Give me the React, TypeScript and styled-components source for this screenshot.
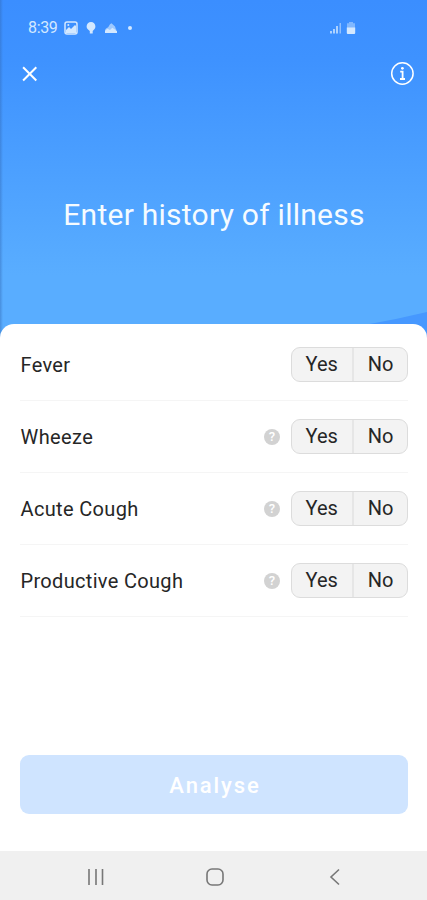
import React from "react";
import styled, { createGlobalStyle } from "styled-components";

const GlobalStyle = createGlobalStyle`
  * { box-sizing: border-box; }
  html, body { margin: 0; padding: 0; background: #fff; }
  body { font-family: Roboto, "Liberation Sans", sans-serif; }
  button { font-family: inherit; }
`;

const Screen = styled.main`
  width: 427px;
  height: 900px;
  display: flex;
  flex-direction: column;
  overflow: hidden;
  background: #fff;
`;

const Header = styled.header`
  position: relative;
  height: 338px;
  flex: none;
  display: flex;
  flex-direction: column;
  background:
    linear-gradient(to right, rgba(50, 105, 180, 0.45) 0, rgba(50, 105, 180, 0) 3px),
    linear-gradient(#3b8eff 0, #3e92ff 60px, #59adff 275px, #59adff 100%);
`;

const Wedge = styled.svg`
  position: absolute;
  right: 0;
  bottom: 0;
`;

const StatusBar = styled.div`
  height: 55px;
  padding: 0 71px 0 28px;
  display: flex;
  align-items: center;
  justify-content: space-between;
`;

const StatusGroup = styled.div<{ $gap: number }>`
  display: flex;
  align-items: center;
  gap: ${(p) => p.$gap}px;
  color: #d3e8ff;
`;

const Clock = styled.span`
  width: 28px;
  font-size: 16px;
  line-height: 20px;
  letter-spacing: -0.35px;
`;

const Toolbar = styled.div`
  height: 37px;
  padding: 0 13px 0 22px;
  display: flex;
  align-items: center;
  justify-content: space-between;
`;

const IconButton = styled.button`
  padding: 0;
  border: 0;
  background: none;
  color: #fff;
  display: flex;
`;

const Title = styled.h1`
  margin: 102px 0 0;
  padding-left: 1px;
  font-size: 30px;
  line-height: 41px;
  font-weight: 400;
  letter-spacing: 0.26px;
  text-align: center;
  color: #f5fbff;
`;

const Sheet = styled.section`
  position: relative;
  flex: 1;
  margin-top: -14.5px;
  padding: 5.5px 19px 37px 20px;
  display: flex;
  flex-direction: column;
  justify-content: space-between;
  background: #fff;
  border-radius: 14px 14px 0 0;
`;

const List = styled.div`
  display: flex;
  flex-direction: column;
`;

const Row = styled.div`
  height: 72px;
  width: 388px;
  display: flex;
  align-items: center;
  border-bottom: 1px solid #f5f5f5;
`;

const Label = styled.span<{ $spacing: number }>`
  flex: 1;
  padding: 1px 0 0 0.5px;
  font-size: 20px;
  line-height: 24px;
  letter-spacing: ${(p) => p.$spacing}px;
  color: #262626;
`;

const Help = styled.span`
  width: 16px;
  height: 16px;
  margin-right: 10.5px;
  border-radius: 50%;
  background: #d2d2d2;
  color: #fff;
  font-size: 13px;
  line-height: 16px;
  font-weight: 500;
  text-align: center;
`;

const Segments = styled.div`
  width: 117.5px;
  height: 35px;
  display: flex;
  overflow: hidden;
  background: #f3f3f3;
  border: 1px solid #dcdcdc;
  border-radius: 9px;
`;

const Segment = styled.button<{ $width: number }>`
  width: ${(p) => p.$width}px;
  flex: none;
  padding: 0;
  border: 0;
  background: none;
  color: #262626;
  font-size: 20px;
  line-height: 33px;
  & + & { border-left: 2px solid #e6e6e6; }
`;

const Analyse = styled.button`
  height: 59px;
  width: 388px;
  padding: 2px 0 0 2px;
  border: 0;
  border-radius: 9px;
  background: #cfe4ff;
  color: #fff;
  font-size: 22px;
  font-weight: 500;
  letter-spacing: 1.9px;
`;

const NavBar = styled.nav`
  height: 49px;
  flex: none;
  padding: 2px 32px 0 36px;
  display: grid;
  grid-template-columns: repeat(3, 1fr);
  place-items: center;
  background: #f0f0f0;
  color: #777;
`;

const symptoms = [
  { name: "Fever", help: false, spacing: 0.3 },
  { name: "Wheeze", help: true, spacing: 0.4 },
  { name: "Acute Cough", help: true, spacing: 0.35 },
  { name: "Productive Cough", help: true, spacing: 0.32 },
];

const GalleryIcon = () => (
  <svg width="14" height="14" viewBox="0 0 14 14">
    <rect x="1" y="1" width="12" height="12" rx="2" fill="none" stroke="currentColor" strokeWidth="1.5" />
    <path d="M2 11V9l3-3 2 2 4-4 1 1v7H2z" fill="currentColor" />
    <circle cx="4.3" cy="4" r="1" fill="currentColor" />
  </svg>
);

const BulbIcon = () => (
  <svg width="10" height="14" viewBox="0 0 10 14">
    <path d="M5 1a4.4 4.4 0 0 1 4.4 4.4C9.4 7.6 8 8.5 6.7 10v2.5H3.8V10C2.2 8.5.6 7.6.6 5.4A4.4 4.4 0 0 1 5 1z" fill="currentColor" />
  </svg>
);

const CloudIcon = () => (
  <svg width="14" height="12" viewBox="0 0 14 12">
    <path d="M2 6.5l2.2-1.3L6 2.3l1.5-1L11 4.5l.8 2.5.7 1H1z" fill="currentColor" opacity=".65" />
    <path d="M1 11V8.5l2.5-1.7L6 8l2.3-2.3L13 9v2z" fill="currentColor" />
  </svg>
);

const SignalIcon = () => (
  <svg width="12" height="12" viewBox="0 0 12 12" fill="currentColor">
    <path d="M0 9h2v2.5H0zM3 7h2v4.5H3zM6 4h2v7.5H6z" opacity=".75" />
    <path d="M9.5 1H11v10.5H9.5z" opacity=".55" />
  </svg>
);

const BatteryIcon = () => (
  <svg width="10" height="14" viewBox="0 0 10 14" fill="currentColor">
    <path d="M3 1h4v1.3h2V7H1V2.3h2z" opacity=".45" />
    <path d="M.8 6.5h8.4V12a1 1 0 0 1-1 1H1.8a1 1 0 0 1-1-1z" />
  </svg>
);

export default function App() {
  return (
    <>
      <GlobalStyle />
      <Screen>
        <Header>
          <Wedge width="60" height="27" viewBox="0 0 60 27">
            <path d="M0 13.5Q31 8 60 1v26H0z" fill="#4698ff" />
          </Wedge>
          <StatusBar>
            <StatusGroup $gap={8}>
              <Clock>8:39</Clock>
              <GalleryIcon />
              <BulbIcon />
              <CloudIcon />
              <svg width="10" height="4" viewBox="0 0 10 4">
                <circle cx="4" cy="2" r="2" fill="currentColor" />
              </svg>
            </StatusGroup>
            <StatusGroup $gap={4}>
              <SignalIcon />
              <BatteryIcon />
            </StatusGroup>
          </StatusBar>
          <Toolbar>
            <IconButton aria-label="Close">
              <svg width="16" height="16" viewBox="0 0 16 16">
                <path d="M1.1 1.3l13.2 13.2M14.3 1.3L1.1 14.5" stroke="currentColor" strokeWidth="2" />
              </svg>
            </IconButton>
            <IconButton aria-label="Information">
              <svg width="24" height="24" viewBox="0 0 24 24">
                <circle cx="12.4" cy="11.5" r="10.7" fill="none" stroke="currentColor" strokeWidth="1.5" />
                <circle cx="12.4" cy="6.3" r="1.4" fill="currentColor" />
                <path d="M10.2 9.7h2.4v7.3M10 17h5" fill="none" stroke="currentColor" strokeWidth="1.8" />
              </svg>
            </IconButton>
          </Toolbar>
          <Title>Enter history of illness</Title>
        </Header>
        <Sheet>
          <List>
            {symptoms.map((s) => (
              <Row key={s.name}>
                <Label $spacing={s.spacing}>{s.name}</Label>
                {s.help && <Help>?</Help>}
                <Segments>
                  <Segment $width={60.5}>Yes</Segment>
                  <Segment $width={55}>No</Segment>
                </Segments>
              </Row>
            ))}
          </List>
          <Analyse>Analyse</Analyse>
        </Sheet>
        <NavBar>
          <svg width="18" height="18" viewBox="0 0 18 18">
            <path d="M2 1v16M9 1v16M15.5 1v16" stroke="currentColor" strokeWidth="1.6" />
          </svg>
          <svg width="18" height="18" viewBox="0 0 18 18">
            <rect x="1" y="1" width="16" height="16" rx="5" fill="none" stroke="currentColor" strokeWidth="1.6" />
          </svg>
          <svg width="18" height="18" viewBox="0 0 18 18">
            <path d="M13 1.5L5 9l8 7.5" fill="none" stroke="currentColor" strokeWidth="1.6" />
          </svg>
        </NavBar>
      </Screen>
    </>
  );
}
